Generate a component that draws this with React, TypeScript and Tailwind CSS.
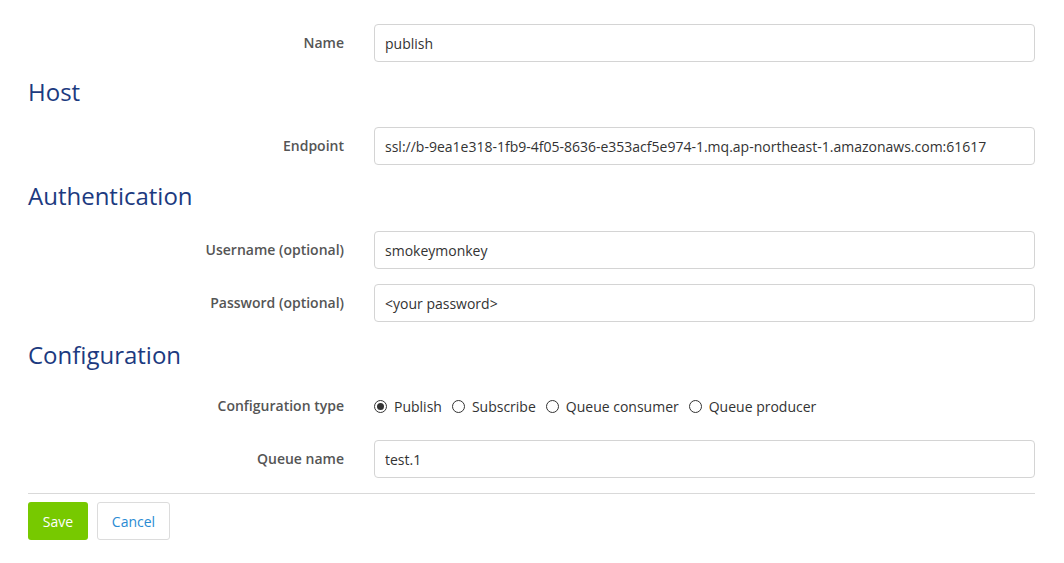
import React, { useState } from "react";

const Field: React.FC<{ label: string; children: React.ReactNode }> = ({ label, children }) => (
  <div className="flex items-center mb-[15px]">
    <label className="w-[316px] shrink-0 text-right pb-[2px] text-[14px] font-semibold text-[#555]">{label}</label>
    <div className="ml-[30px] flex-1">{children}</div>
  </div>
);

const TextInput: React.FC<{ value: string }> = ({ value }) => (
  <input
    defaultValue={value}
    className="w-full h-[38px] px-[10px] border border-[#d4d4d4] rounded-[4px] text-[14px] text-[#333] outline-none bg-white"
  />
);

const Heading: React.FC<{ children: React.ReactNode; className?: string }> = ({ children, className = "h-[32px] mb-[18px]" }) => (
  <h2 className={`leading-[32px] text-[24px] text-[#1c3a80] font-normal ${className}`}>{children}</h2>
);

const types = ["Publish", "Subscribe", "Queue consumer", "Queue producer"];

export default function App() {
  const [type, setType] = useState("Publish");

  return (
    <div className="px-[28px] pt-[24px] pr-[29px] bg-white min-h-screen text-[#333]" style={{ fontFamily: '"Open Sans", sans-serif' }}>
      <Field label="Name">
        <TextInput value="publish" />
      </Field>

      <Heading className="h-[32px] mt-[-1px] mb-[19px]">Host</Heading>
      <Field label="Endpoint">
        <TextInput value="ssl://b-9ea1e318-1fb9-4f05-8636-e353acf5e974-1.mq.ap-northeast-1.amazonaws.com:61617" />
      </Field>

      <Heading className="h-[32px] mb-[19px]">Authentication</Heading>
      <Field label="Username (optional)">
        <TextInput value="smokeymonkey" />
      </Field>
      <Field label="Password (optional)">
        <TextInput value="<your password>" />
      </Field>

      <Heading className="h-[34px] pt-[2px] mb-[16px]">Configuration</Heading>
      <Field label="Configuration type">
        <div className="h-[38px] flex items-center gap-[10px] text-[14px] text-[#333]">
          {types.map((t) => (
            <label key={t} className="flex items-center gap-[7px] cursor-pointer" onClick={() => setType(t)}>
              <span className="w-[13px] h-[13px] rounded-full border border-[#333] flex items-center justify-center">
                {type === t && <span className="w-[7px] h-[7px] rounded-full bg-[#333]" />}
              </span>
              {t}
            </label>
          ))}
        </div>
      </Field>
      <Field label="Queue name">
        <TextInput value="test.1" />
      </Field>

      <div className="border-t border-[#d9d9d9] mt-[14px] pt-[8px] flex gap-[9px]">
        <button className="h-[38px] w-[60px] rounded-[3px] bg-[#77c900] text-white text-[14px]">Save</button>
        <button className="h-[38px] w-[73px] rounded-[3px] border border-[#dcdcdc] bg-white text-[#2a8bd3] text-[14px]">Cancel</button>
      </div>
    </div>
  );
}
